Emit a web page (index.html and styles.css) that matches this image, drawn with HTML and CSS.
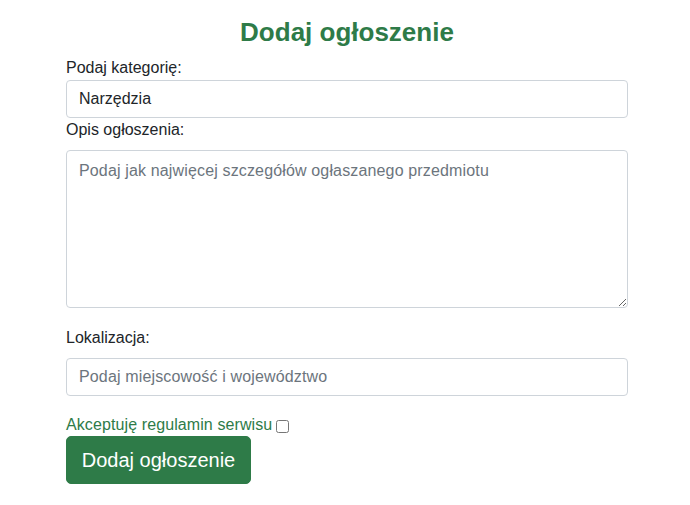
FILE: index.html
```html
<!DOCTYPE html>
<html lang="pl">
<head>
<meta charset="utf-8">
<title>Dodaj ogłoszenie</title>
<link rel="stylesheet" href="styles.css">
</head>
<body>
<form class="form">
  <h2 class="title">Dodaj ogłoszenie</h2>
  <label class="label label-tight" for="cat">Podaj kategorię:</label>
  <input class="control" id="cat" type="text" value="Narzędzia">
  <label class="label" for="desc">Opis ogłoszenia:</label>
  <textarea class="control area" id="desc" placeholder="Podaj jak najwięcej szczegółów ogłaszanego przedmiotu"></textarea>
  <label class="label label-gap" for="loc">Lokalizacja:</label>
  <input class="control" id="loc" type="text" placeholder="Podaj miejscowość i województwo">
  <div class="check-row">
    <label class="check-label" for="terms">Akceptuję regulamin serwisu</label>
    <input class="check" id="terms" type="checkbox">
  </div>
  <button class="btn" type="submit">Dodaj ogłoszenie</button>
</form>
</body>
</html>
```
FILE: styles.css
```css
* { box-sizing: border-box; }
body {
  margin: 0;
  background: #fff;
  font-family: "Liberation Sans", Arial, Helvetica, sans-serif;
  color: #212529;
  font-size: 16px;
  line-height: 1.5;
}
.form {
  width: 562px;
  margin-left: 66px;
  padding-top: 16px;
  display: flex;
  flex-direction: column;
}
.title {
  margin: 0 0 7px;
  text-align: center;
  font-size: 26px;
  line-height: 33px;
  font-weight: 700;
  color: #2e7b48;
}
.label {
  display: block;
  margin-bottom: 8px;
  line-height: 24px;
}
.label-tight { margin-bottom: 0; }
.label-gap { margin-top: 18px; }
.control {
  display: block;
  width: 100%;
  height: 38px;
  padding: 6px 12px;
  font-family: inherit;
  font-size: 16px;
  line-height: 24px;
  color: #212529;
  background: #fff;
  border: 1px solid #ced4da;
  border-radius: 4px;
  outline: none;
}
.control::placeholder { color: #6c757d; opacity: 1; letter-spacing: 0.15px; }
.area {
  height: 158px;
  padding-top: 8px;
  resize: vertical;
}
.check-row {
  display: flex;
  align-items: center;
  margin-top: 17px;
  height: 23px;
}
.check-label {
  color: #2e7b48;
  font-size: 16px;
  line-height: 23px;
  letter-spacing: 0.1px;
}
.check {
  width: 13px;
  height: 13px;
  margin: 4px 0 0 4px;
}
.btn {
  align-self: flex-start;
  margin-top: 0;
  width: 185px;
  height: 48px;
  padding: 0;
  font-family: inherit;
  font-size: 20px;
  color: #fff;
  background: #2e7b48;
  border: 1px solid #2e7b48;
  border-radius: 5px;
  cursor: pointer;
}
```
